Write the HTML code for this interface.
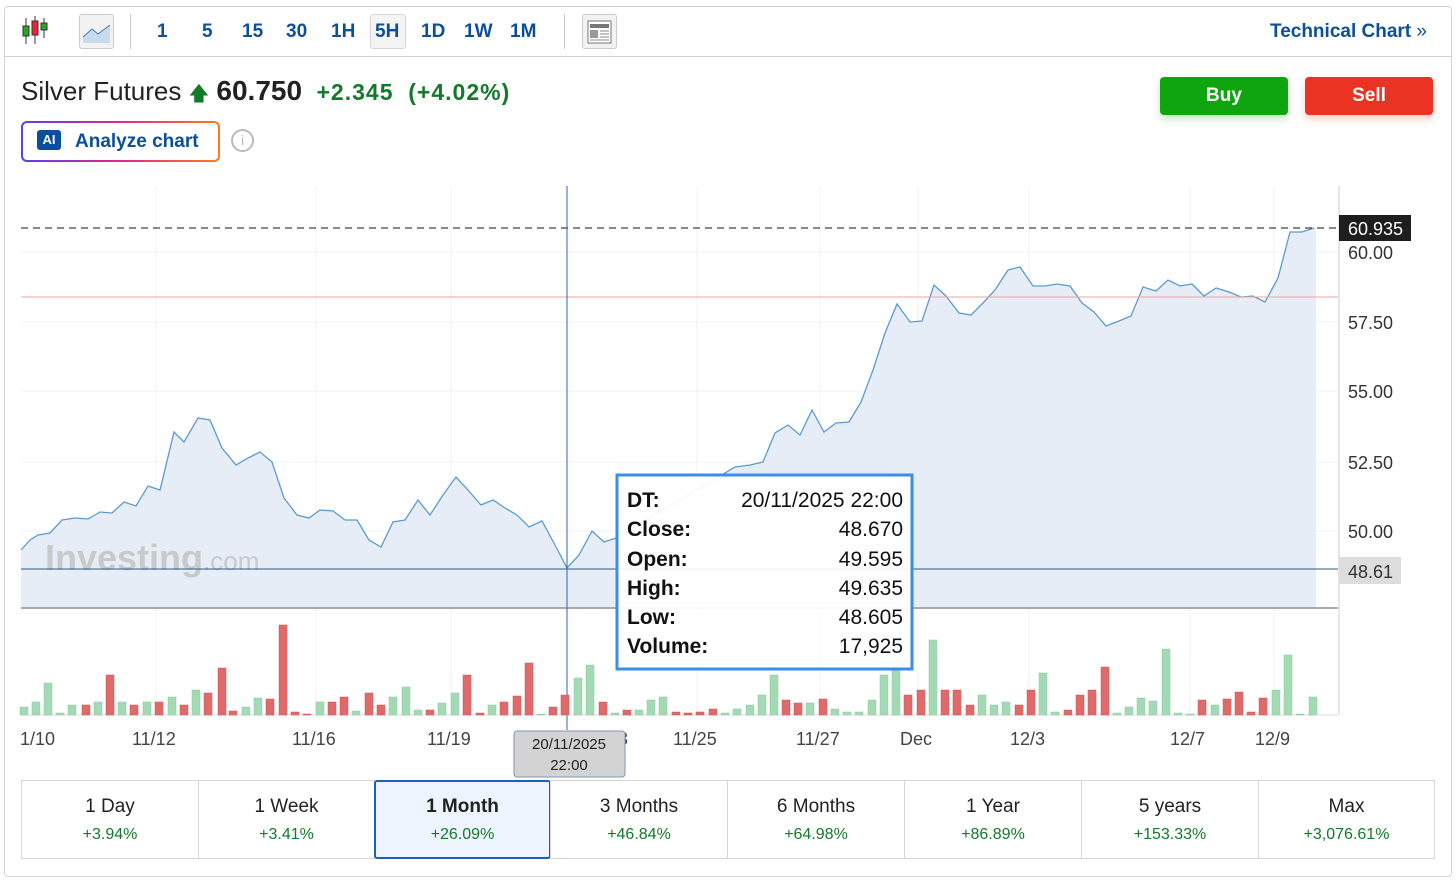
<!DOCTYPE html><html><head><meta charset="utf-8"><style>
*{margin:0;padding:0;box-sizing:border-box}
body{width:1456px;height:883px;background:#fff;font-family:"Liberation Sans",Arial,sans-serif;position:relative;overflow:hidden}
.frame{position:absolute;left:4px;top:6px;width:1448px;height:871px;border:1px solid #d4d4d4;border-radius:4px}
.tb{position:absolute;left:4px;top:6px;width:1448px;height:51px;border-bottom:1px solid #d0d0d0}
.t{position:absolute;top:21px;font-size:19px;font-weight:bold;color:#0b4f9c}
.abs{position:absolute}
.tab{position:absolute;top:780px;height:79px;border:1px solid #d6d6d6;text-align:center}
.tab .a{font-size:19px;color:#222;margin-top:15px}
.tab .b{font-size:16px;color:#127a2a;margin-top:8px}
</style></head><body>
<div class="frame"></div>
<div class="tb"></div>
<svg class="abs" style="left:20px;top:14px" width="32" height="34"><line x1="6" y1="4" x2="6" y2="30" stroke="#333"/><rect x="3" y="12" width="6" height="10" fill="#2aa52a" stroke="#333"/><line x1="15" y1="2" x2="15" y2="30" stroke="#333"/><rect x="12" y="7" width="6" height="14" fill="#e23" stroke="#333"/><line x1="24" y1="4" x2="24" y2="24" stroke="#333"/><rect x="21" y="9" width="6" height="7" fill="#2aa52a" stroke="#333"/></svg>
<div class="abs" style="left:79px;top:14px;width:35px;height:35px;border:1px solid #ccc;border-radius:3px;background:#f2f2f2"><svg width="33" height="33"><path d="M3 28 L3 22 L12 14 L18 19 L30 10 L30 28Z" fill="#c9d9ee"/><path d="M3 22 L12 14 L18 19 L30 10" stroke="#4a7bbf" fill="none"/></svg></div>
<div class="abs" style="left:130px;top:14px;width:1px;height:35px;background:#ccc"></div>
<div class="t" style="left:157px">1</div><div class="t" style="left:202px">5</div><div class="t" style="left:242px">15</div><div class="t" style="left:286px">30</div><div class="t" style="left:331px">1H</div>
<div class="abs" style="left:370px;top:14px;width:36px;height:35px;border:1px solid #d6d6d6;border-radius:3px;background:#f4f4f4"></div><div class="t" style="left:375px">5H</div>
<div class="t" style="left:421px">1D</div><div class="t" style="left:464px">1W</div><div class="t" style="left:510px">1M</div>
<div class="abs" style="left:564px;top:14px;width:1px;height:35px;background:#ccc"></div>
<div class="abs" style="left:582px;top:14px;width:35px;height:35px;border:1px solid #ccc;border-radius:3px;background:#f2f2f2"><svg width="33" height="33"><rect x="5" y="6" width="23" height="22" fill="#fff" stroke="#777"/><rect x="7" y="9" width="19" height="4" fill="#777"/><rect x="7" y="15" width="8" height="8" fill="#999"/><path d="M17 16h9M17 19h9M17 22h9M7 25h19" stroke="#888"/></svg></div>
<div class="abs" style="left:1270px;top:21px;font-size:19px;font-weight:bold;color:#0b4f9c">Technical Chart <span style="font-weight:normal">»</span></div>
<div class="abs" style="left:21px;top:75px;font-size:26px;color:#222;white-space:nowrap">Silver Futures <span style="color:#127a2a;font-size:20px">&#129093;</span> <b style="font-size:28px">60.750</b>&nbsp; <b style="color:#127a2a;font-size:23px;letter-spacing:1px">+2.345&nbsp; (+4.02%)</b></div>
<div class="abs" style="left:1160px;top:77px;width:128px;height:38px;background:#0ea50e;border-radius:4px;color:#fff;font-weight:bold;font-size:19px;text-align:center;line-height:38px;box-shadow:0 4px 8px rgba(14,165,14,.25)">Buy</div>
<div class="abs" style="left:1305px;top:77px;width:128px;height:38px;background:#ea3323;border-radius:4px;color:#fff;font-weight:bold;font-size:19px;text-align:center;line-height:38px;box-shadow:0 4px 8px rgba(234,51,35,.25)">Sell</div>
<div class="abs" style="left:21px;top:121px;width:199px;height:41px;border-radius:6px;background:linear-gradient(90deg,#5b3df5,#e0288a,#ff7a1a);padding:2px"><div style="background:#fff;border-radius:4px;height:37px;padding-left:14px;line-height:37px;font-size:19px;font-weight:bold;color:#0b4f9c"><span style="display:inline-block;background:#0b4f9c;color:#fff;font-size:13px;width:24px;height:20px;line-height:20px;text-align:center;border-radius:3px;vertical-align:3px;margin-right:14px">AI</span>Analyze chart</div></div>
<div class="abs" style="left:231px;top:129px;width:23px;height:23px;border:2px solid #bbb;border-radius:50%;color:#bbb;font-size:14px;text-align:center;line-height:19px">i</div>
<svg class="abs" style="left:0;top:0" width="1456" height="883">
<g stroke="#eef0f3"><path d="M156 186V715M316 186V715M451 186V715M697 186V715M820 186V715M918 186V715M1029 186V715M1190 186V715M1274 186V715M21 252H1338M21 322H1338M21 391H1338M21 462H1338M21 531H1338"/></g>
<line x1="1339" y1="186" x2="1339" y2="715" stroke="#ccc"/>
<path d="M21 550 L30 540 L38 535 L50 533 L62 520 L75 518 L88 519 L100 512 L112 513 L124 502 L136 506 L148 486 L160 490 L174 432 L184 442 L198 418 L210 420 L222 448 L236 465 L248 458 L260 452 L272 462 L284 498 L297 515 L309 518 L320 510 L333 511 L345 520 L357 520 L369 540 L381 547 L393 522 L405 520 L418 500 L430 515 L443 495 L456 477 L468 490 L481 505 L493 500 L505 508 L517 515 L529 527 L542 521 L555 545 L567 568 L579 555 L592 531 L604 542 L616 538 L680 500 L735 467 L750 465 L763 462 L775 433 L788 425 L800 435 L812 410 L824 432 L836 423 L849 422 L861 402 L873 370 L885 333 L897 304 L910 322 L922 321 L934 285 L946 296 L959 313 L971 315 L983 303 L995 290 L1008 270 L1020 267 L1033 286 L1045 286 L1057 284 L1070 286 L1082 303 L1094 312 L1106 326 L1119 321 L1131 316 L1143 287 L1156 291 L1168 280 L1180 286 L1192 284 L1204 296 L1216 288 L1229 292 L1241 297 L1253 296 L1265 302 L1278 278 L1290 232 L1302 232 L1314 228 L1316 228 L1316 608 L21 608Z" fill="#e6edf6" stroke="none"/>
<path d="M21 550 L30 540 L38 535 L50 533 L62 520 L75 518 L88 519 L100 512 L112 513 L124 502 L136 506 L148 486 L160 490 L174 432 L184 442 L198 418 L210 420 L222 448 L236 465 L248 458 L260 452 L272 462 L284 498 L297 515 L309 518 L320 510 L333 511 L345 520 L357 520 L369 540 L381 547 L393 522 L405 520 L418 500 L430 515 L443 495 L456 477 L468 490 L481 505 L493 500 L505 508 L517 515 L529 527 L542 521 L555 545 L567 568 L579 555 L592 531 L604 542 L616 538 L680 500 L735 467 L750 465 L763 462 L775 433 L788 425 L800 435 L812 410 L824 432 L836 423 L849 422 L861 402 L873 370 L885 333 L897 304 L910 322 L922 321 L934 285 L946 296 L959 313 L971 315 L983 303 L995 290 L1008 270 L1020 267 L1033 286 L1045 286 L1057 284 L1070 286 L1082 303 L1094 312 L1106 326 L1119 321 L1131 316 L1143 287 L1156 291 L1168 280 L1180 286 L1192 284 L1204 296 L1216 288 L1229 292 L1241 297 L1253 296 L1265 302 L1278 278 L1290 232 L1302 232 L1314 228" fill="none" stroke="#5a9bd0" stroke-width="1.3"/>
<text x="45" y="570" font-size="36" font-weight="bold" fill="#c9c9c9" font-family="Liberation Sans">Investing<tspan font-weight="normal" font-size="26">.com</tspan></text>
<line x1="21" y1="297" x2="1338" y2="297" stroke="#f3a0a0"/>
<line x1="21" y1="228" x2="1338" y2="228" stroke="#111" stroke-dasharray="7,5"/>
<line x1="21" y1="569" x2="1338" y2="569" stroke="#2c5a8c"/>
<line x1="21" y1="608" x2="1338" y2="608" stroke="#aaa" stroke-width="2"/>
<line x1="567" y1="186" x2="567" y2="730" stroke="#2c66b0"/>
<g font-size="18" fill="#333" font-family="Liberation Sans"><text x="1348" y="259">60.00</text><text x="1348" y="329">57.50</text><text x="1348" y="398">55.00</text><text x="1348" y="469">52.50</text><text x="1348" y="538">50.00</text></g>
<rect x="1339" y="215" width="72" height="26" fill="#1e1e1e"/><text x="1348" y="235" font-size="18" fill="#fff">60.935</text>
<rect x="1339" y="557" width="62" height="27" fill="#ddd"/><text x="1348" y="578" font-size="18" fill="#333">48.61</text>
<g font-size="18" fill="#444"><text x="20" y="745">1/10</text><text x="132" y="745">11/12</text><text x="292" y="745">11/16</text><text x="427" y="745">11/19</text><text x="618" y="745">3</text><text x="673" y="745">11/25</text><text x="796" y="745">11/27</text><text x="900" y="745">Dec</text><text x="1010" y="745">12/3</text><text x="1170" y="745">12/7</text><text x="1255" y="745">12/9</text></g>
<line x1="21" y1="715" x2="1338" y2="715" stroke="#ddd"/>
<g id="bars"></g>
<rect x="514" y="731" width="111" height="46" rx="3" fill="#d3d3d3" stroke="#7f97b8"/><text x="569" y="749" font-size="15" text-anchor="middle" fill="#222">20/11/2025</text><text x="569" y="770" font-size="15" text-anchor="middle" fill="#222">22:00</text>
<rect x="617" y="475" width="295" height="194" fill="#fff" fill-opacity=".93" stroke="#3a8ee6" stroke-width="3"/>
<g font-size="21" fill="#111"><g font-weight="bold"><text x="627" y="507">DT:</text><text x="627" y="536">Close:</text><text x="627" y="566">Open:</text><text x="627" y="595">High:</text><text x="627" y="624">Low:</text><text x="627" y="653">Volume:</text></g><g text-anchor="end"><text x="903" y="507">20/11/2025 22:00</text><text x="903" y="536">48.670</text><text x="903" y="566">49.595</text><text x="903" y="595">49.635</text><text x="903" y="624">48.605</text><text x="903" y="653">17,925</text></g></g>
</svg>
<script>
var d="24 8 g,36 13 g,48 32 g,60 2 g,72 10 g,86 10 r,98 13 g,110 40 r,122 13 g,134 10 r,147 13 g,159 13 r,172 18 g,184 10 r,196 25 g,208 22 r,222 47 r,233 4 r,246 8 g,258 17 g,270 16 r,283 90 r,295 3 r,307 1 r,320 13 g,332 13 r,344 18 r,356 4 g,369 22 r,381 10 r,393 18 g,406 28 g,418 5 g,430 5 r,442 12 g,455 22 g,467 40 r,480 2 r,492 10 g,504 13 r,517 19 r,529 52 r,541 1 g,553 8 r,565 20 r,578 37 g,590 50 g,603 13 r,615 2 g,627 5 r,639 5 g,651 15 g,663 18 g,676 3 r,688 2 r,700 3 r,713 6 r,725 2 g,737 6 g,750 10 g,762 20 g,774 40 g,786 15 r,798 12 r,810 12 g,823 16 r,835 6 g,847 3 g,859 3 g,872 15 g,884 40 g,896 45 g,908 20 r,921 25 r,933 75 g,945 25 r,957 25 r,970 10 r,982 20 g,994 10 g,1006 13 g,1019 10 r,1031 25 r,1043 42 g,1055 3 g,1068 5 r,1080 20 r,1092 25 r,1105 48 r,1117 2 g,1129 8 g,1141 17 g,1153 14 g,1166 66 g,1178 2 g,1190 1 g,1202 15 r,1215 10 g,1227 16 r,1239 23 r,1251 3 r,1263 17 r,1276 25 g,1288 60 g,1300 1 g,1313 18 g".split(",");
var s="";d.forEach(function(e){var p=e.split(" ");if(+p[0]>617&&+p[0]<912&&715-+p[1]<670)p[1]=Math.min(+p[1],45);s+='<rect x="'+(p[0]-4)+'" y="'+(715-p[1])+'" width="8" height="'+p[1]+'" fill="'+(p[2]=="g"?"#a3d9b5":"#e06a6a")+'" stroke="'+(p[2]=="g"?"#8ccaa0":"#cc5555")+'" stroke-width=".5"/>';});
document.getElementById("bars").innerHTML=s;
</script>
<div class="tab" style="left:21px;width:178px"><div class="a">1 Day</div><div class="b">+3.94%</div></div>
<div class="tab" style="left:198px;width:177px"><div class="a">1 Week</div><div class="b">+3.41%</div></div>
<div class="tab" style="left:374px;width:177px;border:2px solid #1a5fc4;background:#edf4fd;border-radius:3px"><div class="a" style="font-weight:bold;margin-top:14px">1 Month</div><div class="b">+26.09%</div></div>
<div class="tab" style="left:550px;width:178px"><div class="a">3 Months</div><div class="b">+46.84%</div></div>
<div class="tab" style="left:727px;width:178px"><div class="a">6 Months</div><div class="b">+64.98%</div></div>
<div class="tab" style="left:904px;width:178px"><div class="a">1 Year</div><div class="b">+86.89%</div></div>
<div class="tab" style="left:1081px;width:178px"><div class="a">5 years</div><div class="b">+153.33%</div></div>
<div class="tab" style="left:1258px;width:177px"><div class="a">Max</div><div class="b">+3,076.61%</div></div>
</body></html>
